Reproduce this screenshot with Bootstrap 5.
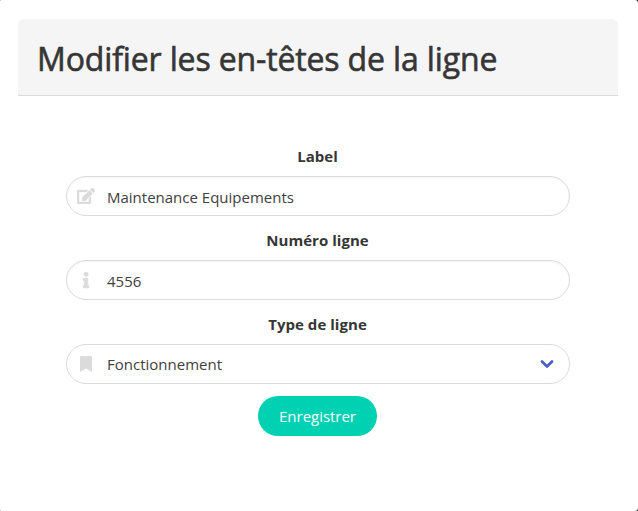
<!DOCTYPE html>
<html lang="fr">
<head>
<meta charset="utf-8">
<meta name="viewport" content="width=device-width, initial-scale=1">
<title>Modifier les en-têtes de la ligne</title>
<link href="https://cdn.jsdelivr.net/npm/bootstrap@5.3.0/dist/css/bootstrap.min.css" rel="stylesheet">
<style>
html { background: #222; }
body { font-family: "Open Sans", "Noto Sans", sans-serif; color: #363636; background: #222; overflow: hidden; }
.sheet { height: 511px; padding: 19px 20px 0 18px; border-radius: 1px 3px 3px 1px; }
.sheet-head { height: 77px; background: #f5f5f5; border-bottom: 1px solid #dbdbdb; border-radius: 6px 6px 0 0; padding: 3px 20px 0 19px; }
.sheet-title { font-size: 32px; font-weight: 500; line-height: 36px; letter-spacing: -.14px; white-space: nowrap; -webkit-text-stroke: .6px #363636; }
.sheet-form { padding: 48px 48px 0; }
.field-label { font-size: 15px; line-height: 24px; font-weight: 700; margin-bottom: 8px; padding-right: 1px; letter-spacing: .04px; }
.field-box { height: 40px; border: 1px solid #dbdbdb; box-shadow: inset 0 1px 2px rgba(10,10,10,.05); margin-bottom: 12px; }
.field-box.plain { box-shadow: none; }
.field-icon { width: 38px; color: #dbdbdb; padding-right: 1px; }
.field-input { font-size: 15px; line-height: 24px; color: #404040; padding: 0 0 0 2px; outline: 0; min-width: 0; appearance: none; }
input.field-input { padding-top: 2px; }
.chevron { color: #485fc7; margin-right: 15px; }
.save-btn { width: 119px; height: 40px; background: #00d1b2; font-size: 15px; color: #fff; margin-right: 1px; letter-spacing: -.03px; }
.save-btn:hover { background: #00c4a7; color: #fff; }
</style>
</head>
<body>
<main class="sheet bg-white">
  <header class="sheet-head d-flex align-items-center">
    <h1 class="sheet-title mb-0">Modifier les en-têtes de la ligne</h1>
  </header>
  <form class="sheet-form d-flex flex-column align-items-stretch text-center">
    <label class="field-label" for="label">Label</label>
    <div class="field-box rounded-pill d-flex align-items-center">
      <span class="field-icon d-flex justify-content-center"><svg width="18" height="16" viewBox="0 0 576 512" fill="currentColor"><path d="M402.600 83.200l90.200 90.200c3.800 3.800 3.800 10 0 13.800L274.400 405.600l-92.800 10.300c-12.400 1.400-22.900-9.100-21.500-21.500l10.300-92.800L388.800 83.200c3.800-3.800 10-3.800 13.800 0zm162-22.900l-48.800-48.800c-15.200-15.200-39.900-15.200-55.200 0l-35.400 35.400c-3.800 3.800-3.800 10 0 13.800l90.200 90.200c3.800 3.800 10 3.800 13.800 0l35.400-35.400c15.200-15.300 15.200-40 0-55.200zM384 346.200V448H64V128h229.800c3.200 0 6.200-1.300 8.500-3.500l40-40c7.600-7.600 2.200-20.500-8.500-20.500H48C21.500 64 0 85.500 0 112v352c0 26.500 21.500 48 48 48h352c26.500 0 48-21.500 48-48V306.200c0-10.700-12.900-16-20.500-8.500l-40 40c-2.200 2.300-3.500 5.300-3.500 8.500z" stroke="currentColor" stroke-width="12"/></svg></span>
      <input class="field-input flex-grow-1 border-0 bg-transparent" id="label" type="text" value="Maintenance Equipements">
    </div>
    <label class="field-label" for="numero">Numéro ligne</label>
    <div class="field-box rounded-pill d-flex align-items-center">
      <span class="field-icon d-flex justify-content-center"><svg width="6" height="16" viewBox="0 0 192 512" fill="currentColor" overflow="visible"><path d="M20 424.200h20V279.800H20c-11 0-20-9-20-20V212c0-11 9-20 20-20h112c11 0 20 9 20 20v212.200h20c11 0 20 9 20 20V492c0 11-9 20-20 20H20c-11 0-20-9-20-20v-47.800c0-11 9-20 20-20zM96 0C56.200 0 24 32.200 24 72s32.200 72 72 72 72-32.200 72-72S135.800 0 96 0z" stroke="currentColor" stroke-width="12"/></svg></span>
      <input class="field-input flex-grow-1 border-0 bg-transparent" id="numero" type="text" value="4556">
    </div>
    <label class="field-label" for="type">Type de ligne</label>
    <div class="field-box plain rounded-pill d-flex align-items-center">
      <span class="field-icon d-flex justify-content-center"><svg width="12" height="16" viewBox="0 0 384 512" fill="currentColor" overflow="visible"><path d="M0 512V48C0 21.500 21.500 0 48 0h288c26.500 0 48 21.500 48 48v464L192 400 0 512z"/></svg></span>
      <select class="field-input flex-grow-1 border-0 bg-transparent" id="type"><option>Fonctionnement</option></select>
      <svg class="chevron" width="14" height="10" viewBox="0 0 14 10" fill="none" stroke="currentColor" stroke-width="2.700" stroke-linecap="round" stroke-linejoin="round"><path d="M2 2.500l5 5 5-5"/></svg>
    </div>
    <button class="save-btn btn rounded-pill border-0 p-0 align-self-center" type="button">Enregistrer</button>
  </form>
</main>
<script src="https://cdn.jsdelivr.net/npm/bootstrap@5.3.0/dist/js/bootstrap.bundle.min.js"></script>
</body>
</html>
